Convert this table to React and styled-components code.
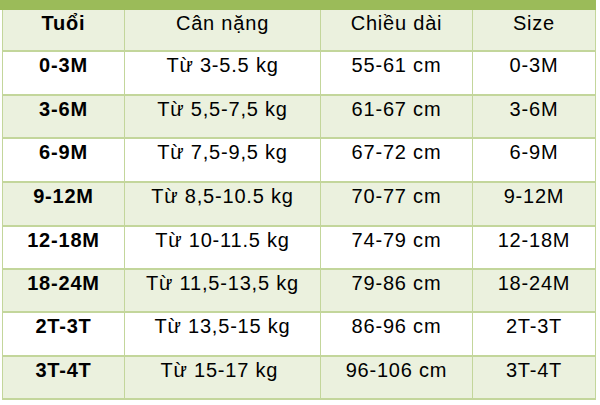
import styled, { createGlobalStyle } from "styled-components";

const GlobalStyle = createGlobalStyle`
  body {
    margin: 0;
    background: #ffffff;
    font-family: "Liberation Sans", Arial, sans-serif;
  }
`;

const Wrapper = styled.div`
  width: 596px;
`;

const TopBar = styled.div`
  height: 10px;
  background: #9bbb59;
`;

const Table = styled.div`
  display: grid;
  grid-template-columns: 122px 196px 152px 123px;
  margin-left: 2px;
  border-left: 1px solid #c3d69b;
`;

const Cell = styled.div`
  box-sizing: border-box;
  height: ${(p) => p.$h}px;
  padding-top: 2px;
  background: ${(p) => (p.$alt ? "#ebf1de" : "#ffffff")};
  border-right: 1px solid #c3d69b;
  border-bottom: 2px solid #c3d69b;
  text-align: center;
  font-size: 20px;
  line-height: 23px;
  letter-spacing: 0.8px;
  font-weight: ${(p) => (p.$bold ? 700 : 400)};
  color: #000000;
  white-space: pre;
`;

const header = ["Tuổi", "Cân nặng", "Chiều dài", "Size"];

const rows = [
  ["0-3M", "Từ 3-5.5 kg", "55-61 cm", "0-3M"],
  ["3-6M", "Từ 5,5-7,5 kg", "61-67 cm", "3-6M"],
  ["6-9M", "Từ 7,5-9,5 kg", "67-72 cm", "6-9M"],
  ["9-12M", "Từ 8,5-10.5 kg", "70-77 cm", "9-12M"],
  ["12-18M", "Từ 10-11.5 kg", "74-79 cm", "12-18M"],
  ["18-24M", "Từ 11,5-13,5 kg", "79-86 cm", "18-24M"],
  ["2T-3T", "Từ 13,5-15 kg", "86-96 cm", "2T-3T"],
  ["3T-4T", "Từ 15-17 kg ", "96-106 cm", "3T-4T"],
];

const heights = [44, 43, 44, 44, 43, 43, 44, 43];

export default function App() {
  return (
    <Wrapper>
      <GlobalStyle />
      <TopBar />
      <Table>
        {header.map((h, i) => (
          <Cell key={h} $h={42} $alt $bold={i === 0}>
            {h}
          </Cell>
        ))}
        {rows.map((row, r) =>
          row.map((text, c) => (
            <Cell key={`${r}-${c}`} $h={heights[r]} $alt={r % 2 === 1} $bold={c === 0}>
              {text}
            </Cell>
          ))
        )}
      </Table>
    </Wrapper>
  );
}
